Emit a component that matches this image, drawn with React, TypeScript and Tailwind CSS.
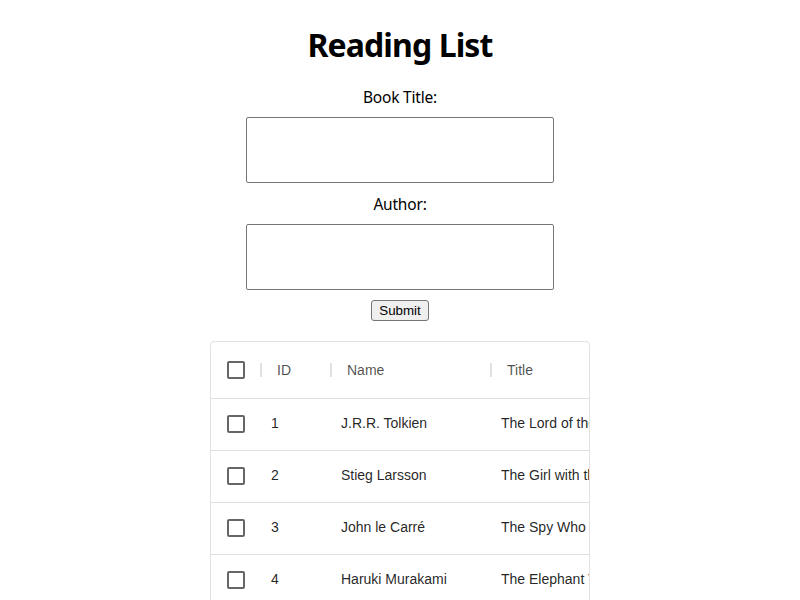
import React, { useState } from 'react'

const books = [
  { id: 1, name: 'J.R.R. Tolkien', title: 'The Lord of the Rings' },
  { id: 2, name: 'Stieg Larsson', title: 'The Girl with the Dragon Tattoo' },
  { id: 3, name: 'John le Carré', title: 'The Spy Who Came in from the Cold' },
  { id: 4, name: 'Haruki Murakami', title: 'The Elephant Vanishes' },
]

const CheckBox = () => (
  <svg width="24" height="24" viewBox="0 0 24 24" className="fill-[rgba(0,0,0,0.6)]">
    <path d="M19 5v14H5V5h14m0-2H5c-1.1 0-2 .9-2 2v14c0 1.1.9 2 2 2h14c1.1 0 2-.9 2-2V5c0-1.1-.9-2-2-2z" />
  </svg>
)

const Sep = () => <div className="w-[2px] h-[14px] bg-[#e0e0e0] shrink-0" />

export default function App() {
  const [title, setTitle] = useState('')
  const [author, setAuthor] = useState('')

  return (
    <div className="flex flex-col items-center pt-[25px] font-['Noto_Sans','Open_Sans',sans-serif] text-black">
      <h1 className="text-[32px] leading-[40px] font-bold tracking-[-0.9px]">Reading List</h1>
      <form className="flex flex-col items-center mt-[20px]" onSubmit={e => e.preventDefault()}>
        <label className="text-[15.5px] leading-[24px] tracking-[-0.2px]">Book Title:</label>
        <input
          value={title}
          onChange={e => setTitle(e.target.value)}
          className="mt-[8px] w-[308px] h-[66px] border border-[#767676] rounded-[2px]"
        />
        <label className="text-[15.5px] leading-[24px] tracking-[-0.2px] mt-[9px]">Author:</label>
        <input
          value={author}
          onChange={e => setAuthor(e.target.value)}
          className="mt-[8px] w-[308px] h-[66px] border border-[#767676] rounded-[2px]"
        />
        <button
          type="submit"
          className="mt-[10px] w-[58px] h-[21px] bg-[#efefef] border border-[#767676] rounded-[3px] text-[13.33px] leading-[17px] font-['Liberation_Sans',Arial,sans-serif]"
        >
          Submit
        </button>
      </form>

      <div className="mt-[20px] w-[380px] h-[280px] border border-[#e0e0e0] rounded-[4px] overflow-hidden font-['Liberation_Sans',Arial,sans-serif] text-[14px]">
        <div className="flex items-center h-[57px] border-b border-[#e0e0e0] text-[rgba(0,0,0,0.7)] whitespace-nowrap">
          <div className="w-[49px] shrink-0 flex justify-center">
            <CheckBox />
          </div>
          <Sep />
          <div className="w-[68px] shrink-0 pl-[15px]">ID</div>
          <Sep />
          <div className="w-[158px] shrink-0 pl-[15px]">Name</div>
          <Sep />
          <div className="w-[200px] shrink-0 pl-[15px]">Title</div>
        </div>
        {books.map(b => (
          <div
            key={b.id}
            className="flex items-center h-[52px] pb-[2px] border-b border-[#e0e0e0] text-[rgba(0,0,0,0.87)] whitespace-nowrap"
          >
            <div className="w-[49px] shrink-0 flex justify-center">
              <CheckBox />
            </div>
            <div className="w-[70px] shrink-0 pl-[11px]">{b.id}</div>
            <div className="w-[160px] shrink-0 pl-[11px]">{b.name}</div>
            <div className="w-[300px] shrink-0 pl-[11px]">{b.title}</div>
          </div>
        ))}
      </div>
    </div>
  )
}
